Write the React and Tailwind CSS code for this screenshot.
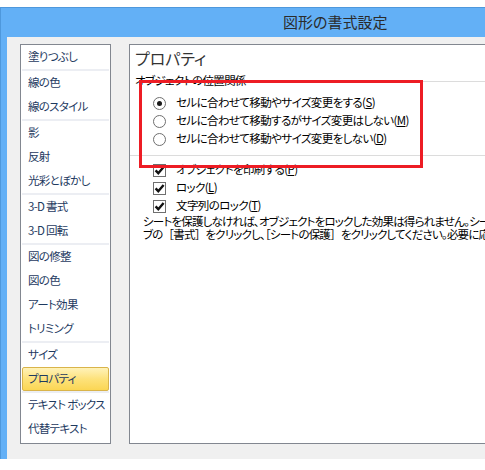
import React from "react";

const items = [
  ["塗りつぶし"],
  "sep",
  ["線の色"],
  ["線のスタイル"],
  "sep",
  ["影"],
  ["反射"],
  ["光彩とぼかし"],
  "sep",
  ["3-D 書式"],
  ["3-D 回転"],
  "sep",
  ["図の修整"],
  ["図の色"],
  ["アート効果"],
  ["トリミング"],
  "sep",
  ["サイズ"],
  ["プロパティ", true],
  "sep",
  ["テキスト ボックス"],
  ["代替テキスト"],
];

function Radio({ checked, children }) {
  return (
    <div className="flex h-[18px] items-center pl-[18px]">
      <span className="flex h-[13px] w-[13px] items-center justify-center rounded-full border border-[#6f6f6f] bg-white">
        {checked && <span className="h-[5px] w-[5px] rounded-full bg-[#1a1a1a]" />}
      </span>
      <span className="ml-[10px] whitespace-nowrap text-black">{children}</span>
    </div>
  );
}

function Check({ children }) {
  return (
    <div className="flex h-[18px] items-center pl-[18px]">
      <span className="flex h-[13px] w-[13px] items-center justify-center border border-[#6f6f6f] bg-white">
        <svg width="11" height="11" viewBox="0 0 11 11">
          <path d="M1.6 5.4 L4.3 8.2 L9.6 2" fill="none" stroke="#111" strokeWidth="2.4" />
        </svg>
      </span>
      <span className="ml-[10px] whitespace-nowrap text-black">{children}</span>
    </div>
  );
}

const B = ({ children }) => <span className="[font-feature-settings:normal]">{children}</span>;

export default function App() {
  return (
    <div
      className="h-[470px] w-[485px] overflow-hidden bg-white pt-[7px] text-[11px] [font-feature-settings:'palt']"
      style={{ fontFamily: '"Noto Sans CJK JP", "Noto Sans", sans-serif' }}
    >
      <div className="flex h-[452px] w-[700px] flex-col border-l border-t border-[#4e98dc] bg-[#63b0f6]">
        <div className="flex h-[29px] items-center pl-[282px] text-[15px] text-[#2b2b2b]">図形の書式設定</div>
        <div className="ml-[6px] flex flex-1 bg-[#f0f0f0] pl-[13px] pt-[7px]">
          <div className="flex h-[400px] w-[91px] flex-col border border-[#828790] bg-white text-[11.5px] text-[#1e3a5f] [letter-spacing:-0.7px]">
            {items.map((it, i) =>
              it === "sep" ? (
                <div key={i} className="mx-[1px] h-[2px] shrink-0 bg-[#eceef3]" />
              ) : it[1] ? (
                <div
                  key={i}
                  className="mx-[1px] flex h-[24px] shrink-0 items-center rounded-[2px] border border-[#d9b44a] bg-gradient-to-b from-[#fff2b8] via-[#fde27a] to-[#fbd653] pl-[5px] whitespace-nowrap"
                >
                  {it[0]}
                </div>
              ) : (
                <div key={i} className="flex h-[24px] shrink-0 items-center pl-[7px] whitespace-nowrap">
                  {it[0]}
                </div>
              )
            )}
          </div>
          <div className="relative ml-[18px] flex h-[400px] flex-1 flex-col overflow-hidden border border-[#828790] bg-white pl-[5px] text-[11.5px] [letter-spacing:-0.6px]">
            <div className="mt-[1px] h-[24px] text-[16px] leading-[24px] text-[#333] [letter-spacing:0]">プロパティ</div>
            <div className="mt-[3px] flex h-[16px] items-center">
              <span className="whitespace-nowrap text-black">オブジェクトの位置関係</span>
              <span className="ml-[4px] h-px flex-1 bg-[#dcdcdc]" />
            </div>
            <div className="mt-[5px]">
              <Radio checked>
                セルに合わせて移動やサイズ変更をする(<u>S</u>)
              </Radio>
              <Radio>
                セルに合わせて移動するがサイズ変更はしない(<u>M</u>)
              </Radio>
              <Radio>
                セルに合わせて移動やサイズ変更をしない(<u>D</u>)
              </Radio>
            </div>
            <div className="-ml-[5px] mt-[7px] h-px bg-[#dcdcdc]" />
            <div className="mt-[5px]">
              <Check>
                オブジェクトを印刷する(<u>P</u>)
              </Check>
              <Check>
                ロック(<u>L</u>)
              </Check>
              <Check>
                文字列のロック(<u>T</u>)
              </Check>
            </div>
            <div className="pl-[8px] leading-[13px] text-black whitespace-nowrap [letter-spacing:-0.8px]">
              <div>シートを保護しなければ、オブジェクトをロックした効果は得られません。シートを保護するには</div>
              <div>
                ブの<B>［</B>書式<B>］</B>をクリックし、<B>［</B>シートの保護<B>］</B>をクリックしてください。必要に応じて
              </div>
            </div>
            <div className="pointer-events-none absolute left-[9px] top-[35px] h-[88px] w-[284px] border-[3px] border-[#ed1c24]" />
          </div>
        </div>
      </div>
    </div>
  );
}
